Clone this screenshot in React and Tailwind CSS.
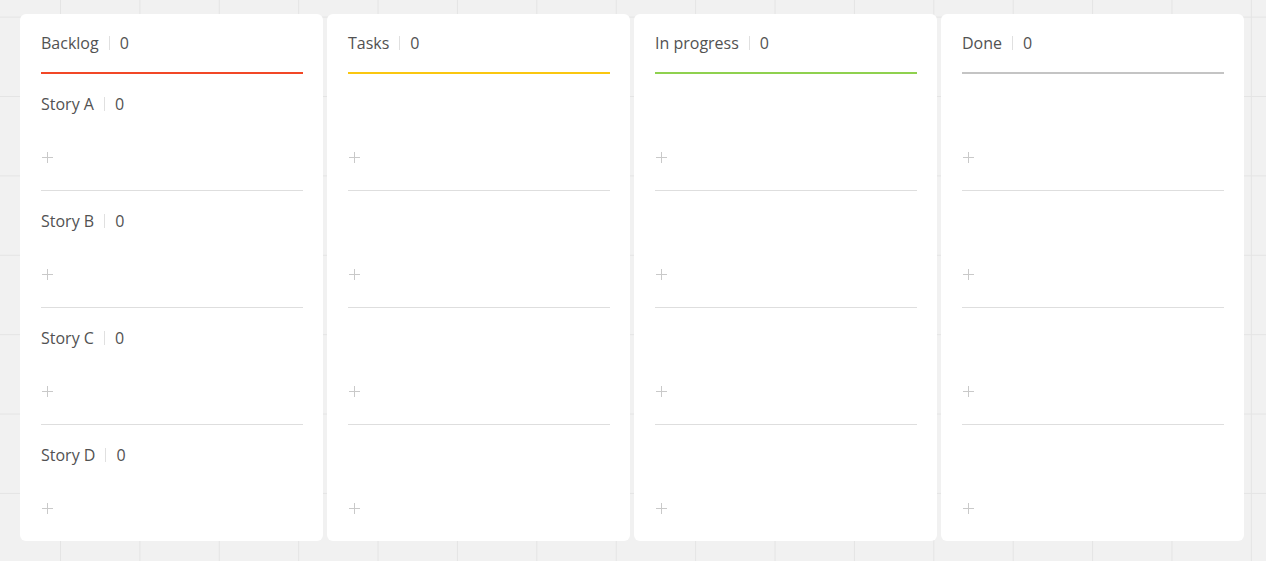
import React from "react";

const columns = [
  { title: "Backlog", color: "#f24726" },
  { title: "Tasks", color: "#fac710" },
  { title: "In progress", color: "#8fd14f" },
  { title: "Done", color: "#c4c4c4" },
];

const stories = ["Story A", "Story B", "Story C", "Story D"];

function Label({ text }) {
  return (
    <div className="flex items-center h-[20px] text-[16px] text-[#525252]">
      <span>{text}</span>
      <span className="mx-[10px] w-px h-[14px] bg-[#e0e0e0]"></span>
      <span>0</span>
    </div>
  );
}

function Plus() {
  return (
    <svg width="11" height="11" viewBox="0 0 11 11">
      <path d="M5.5 0v11M0 5.5h11" stroke="#c9c9c9" strokeWidth="1" />
    </svg>
  );
}

function Column({ col, showStories }) {
  return (
    <div className="w-[303px] h-[527px] bg-white rounded-[6px] px-[21px] flex flex-col shrink-0">
      <div className="h-[58px] pt-[19px]">
        <Label text={col.title} />
      </div>
      <div className="h-[2px] w-[262px]" style={{ backgroundColor: col.color }}></div>
      {stories.map((s, i) => (
        <div
          key={s}
          className={
            "w-[262px] flex flex-col " +
            (i < stories.length - 1 ? "border-b border-[#dedede] h-[117px]" : "h-[116px]")
          }
        >
          <div className="h-[20px] mt-[20px]">
            {showStories && <Label text={s} />}
          </div>
          <div className="mt-[38px] pl-[1px]">
            <Plus />
          </div>
        </div>
      ))}
    </div>
  );
}

export default function App() {
  return (
    <div
      className="min-h-screen bg-[#f1f1f1] bg-[image:linear-gradient(to_right,#e4e4e4_1px,transparent_1px),linear-gradient(to_bottom,#e4e4e4_1px,transparent_1px)] bg-[size:79.4px_79.4px] bg-[position:60px_16.6px] pt-[14px] px-[20px]"
      style={{ fontFamily: '"Open Sans", "Noto Sans", sans-serif' }}
    >
      <div className="flex gap-[4px]">
        {columns.map((c, i) => (
          <Column key={c.title} col={c} showStories={i === 0} />
        ))}
      </div>
    </div>
  );
}
